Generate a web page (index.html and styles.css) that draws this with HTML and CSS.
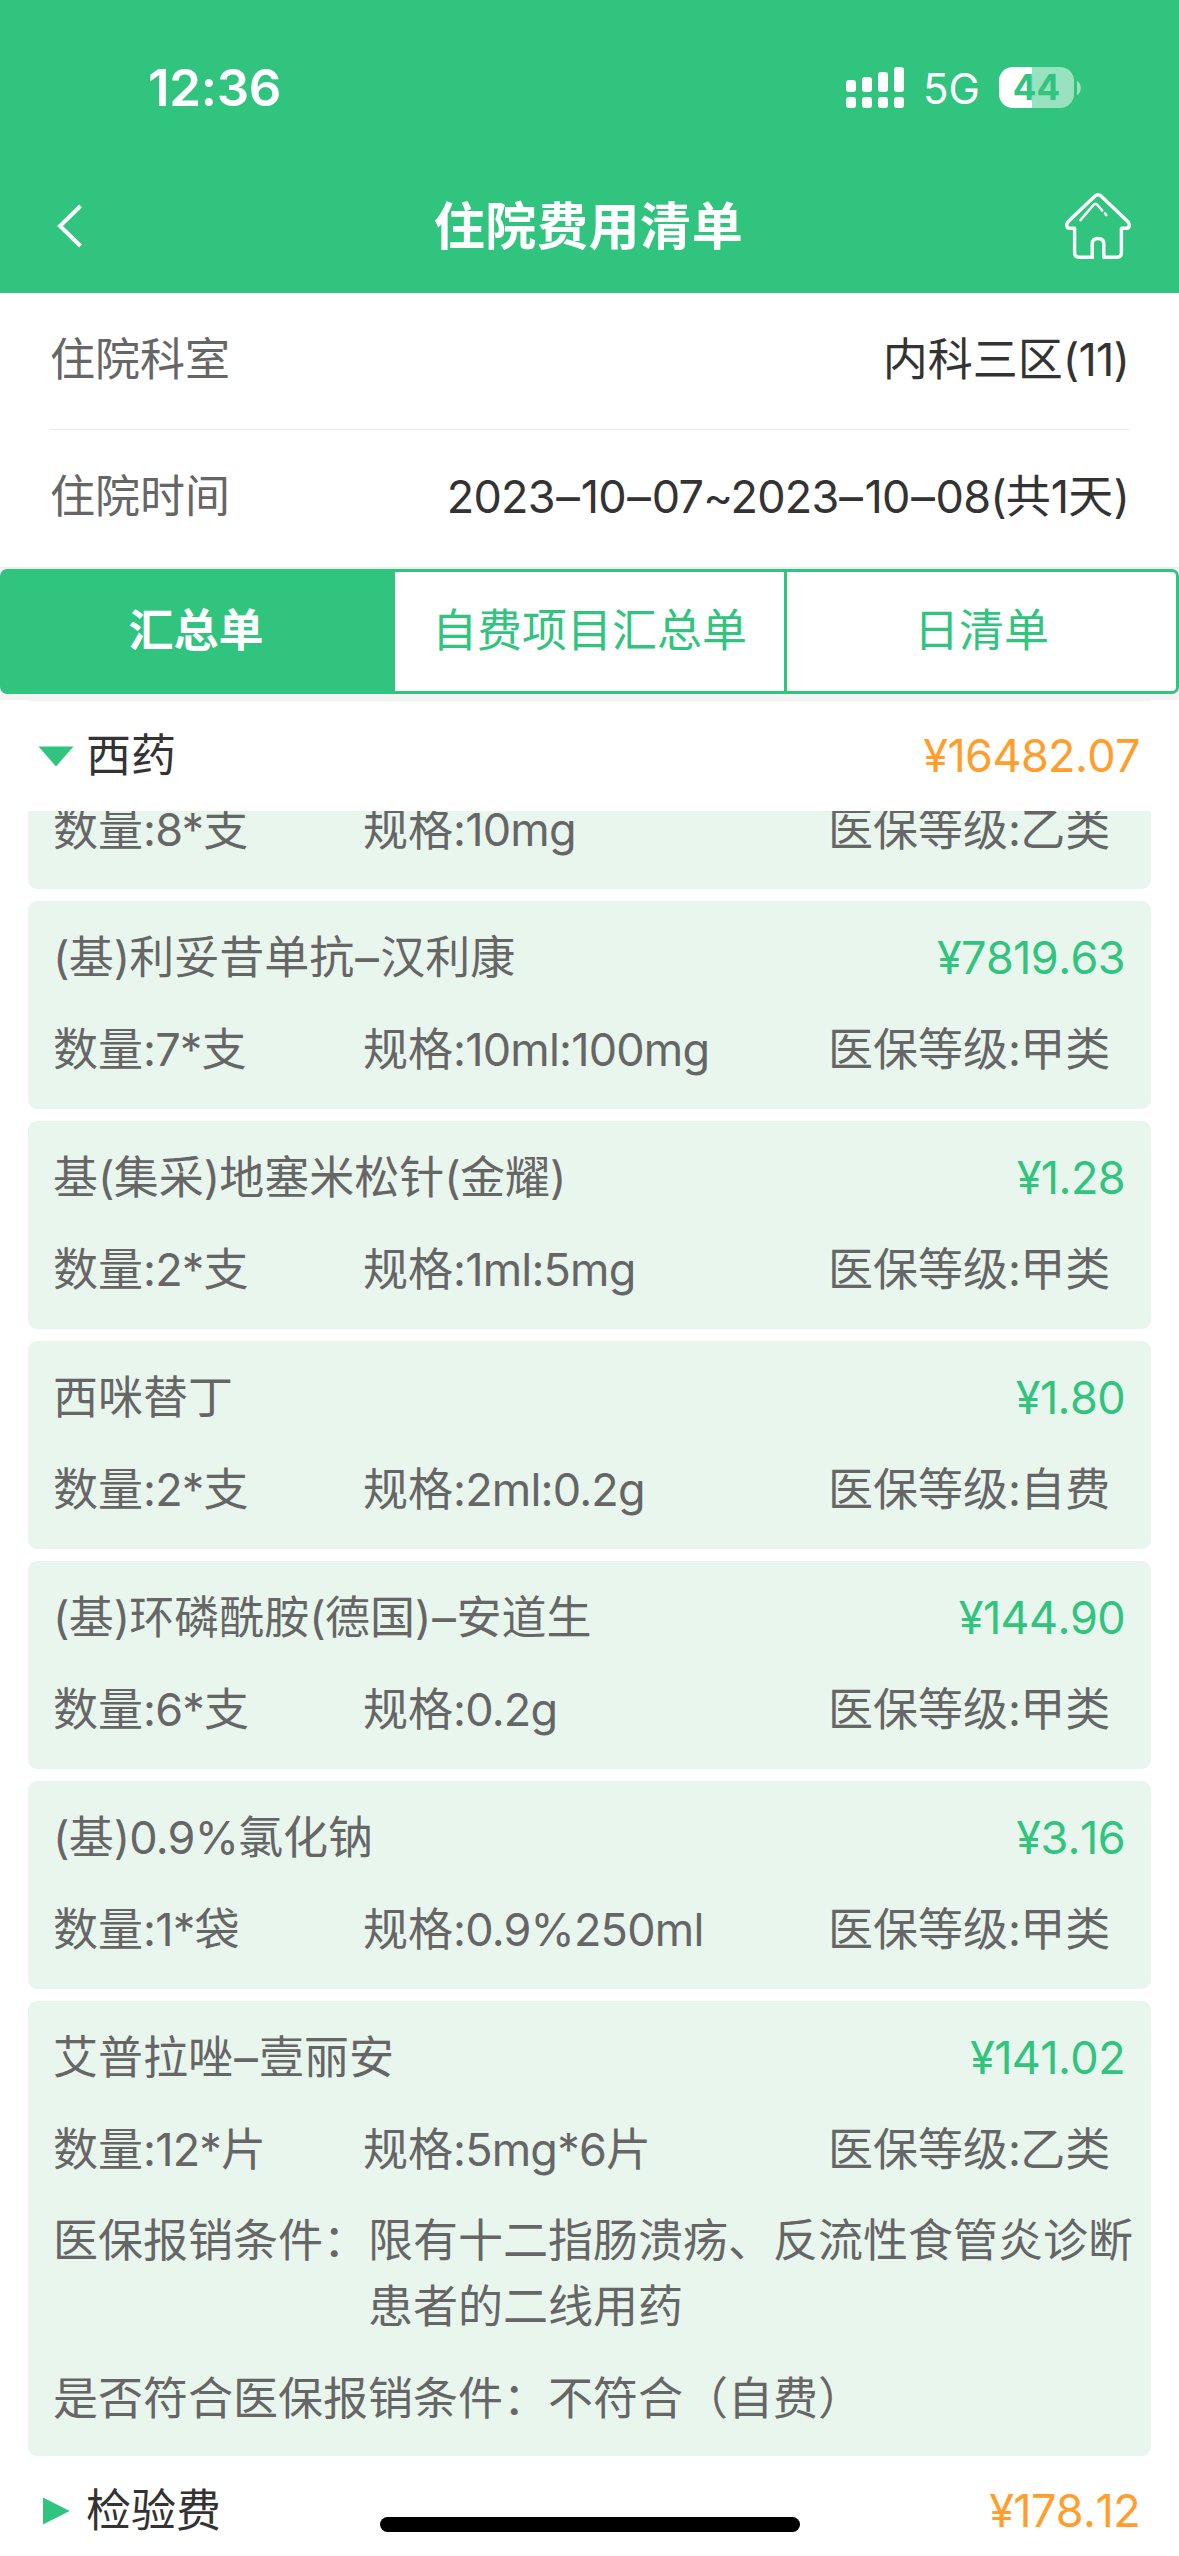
FILE: index.html
```html
<!DOCTYPE html>
<html lang="zh-CN">
<head>
<meta charset="utf-8">
<title>住院费用清单</title>
<link rel="stylesheet" href="styles.css">
</head>
<body>
<div class="screen">
  <header class="header">
    <div class="status">
      <span class="time">12:36</span>
      <div class="status-right">
        <svg class="signal" width="58" height="41" viewBox="0 0 58 41" fill="#fff">
          <rect x="0" y="13" width="10" height="12" rx="3"/><rect x="16" y="10" width="10" height="15" rx="3"/><rect x="32" y="5" width="10" height="20" rx="3"/><rect x="48" y="0" width="10" height="25" rx="3"/>
          <rect x="0" y="30" width="10" height="11" rx="3"/><rect x="16" y="30" width="10" height="11" rx="3"/><rect x="32" y="30" width="10" height="11" rx="3"/><rect x="48" y="30" width="10" height="11" rx="3"/>
        </svg>
        <span class="network">5G</span>
        <div class="battery"><span class="level">44</span></div>
        <svg class="nub" width="4" height="14" viewBox="0 0 4 14"><path d="M0 0C5 2 5 12 0 14Z" fill="#98e2bf"/></svg>
      </div>
    </div>
    <nav class="navbar">
      <svg class="back" width="26" height="44" viewBox="0 0 26 44" fill="none" stroke="#fff" stroke-width="4"><path d="M23.500 2L3 22L23.500 42"/></svg>
      <h1 class="title">住院费用清单</h1>
      <svg class="home" width="66" height="66" viewBox="0 0 66 66" fill="none" stroke="#fff" stroke-width="3.400" stroke-linejoin="round">
        <path d="M29 64.200H14Q9.600 64.200 9.600 59.500V35.300H4.500Q1.700 35.300 1.700 32Q1.700 30 3.500 28.300L30 3Q33 .5 36 3L62.500 28.300Q64.300 30 64.300 32Q64.300 35.300 61.500 35.300H56.400V59.500Q56.400 64.200 52 64.200H38.800V51Q38.800 45.500 33 45.500Q27.200 45.500 27.200 51V64.200"/>
        <path d="M15.500 27L28.500 12Q30.500 9.500 32.500 12L37.200 17.500M40 20.500L41.300 22" stroke-width="2.600" stroke-linecap="round"/>
      </svg>
    </nav>
  </header>

  <section class="info">
    <div class="info-row"><span class="label">住院科室</span><span class="value">内科三区<span class="n">(11)</span></span></div>
    <div class="info-row"><span class="label">住院时间</span><span class="value"><span class="n">2023<span class="dash">–</span>10<span class="dash">–</span>07~2023<span class="dash">–</span>10<span class="dash">–</span>08(</span>共<span class="n">1</span>天<span class="n">)</span></span></div>
  </section>

  <div class="tabs">
    <div class="tab active">汇总单</div>
    <div class="tab">自费项目汇总单</div>
    <div class="tab">日清单</div>
  </div>

  <main class="list">
    <div class="peek"></div>
    <div class="category">
      <svg class="arrow" width="36" height="28" viewBox="0 0 36 28"><path d="M.5 4.500H35.500L18 24.500Z" fill="#31c47e"/></svg>
      <span class="cat-name">西药</span><span class="cat-price">¥16482.07</span>
    </div>

    <div class="clipped">
      <article class="card">
        <div class="detail"><span>数量<span class="n">:8*</span>支</span><span>规格<span class="n">:10mg</span></span><span>医保等级<span class="n">:</span>乙类</span></div>
      </article>
    </div>

    <article class="card">
      <div class="head"><span><span class="n">(</span>基<span class="n">)</span>利妥昔单抗<span class="dash">–</span>汉利康</span><span class="price">¥7819.63</span></div>
      <div class="detail"><span>数量<span class="n">:7*</span>支</span><span>规格<span class="n">:10ml:100mg</span></span><span>医保等级<span class="n">:</span>甲类</span></div>
    </article>
    <article class="card">
      <div class="head"><span>基<span class="n">(</span>集采<span class="n">)</span>地塞米松针<span class="n">(</span>金耀<span class="n">)</span></span><span class="price">¥1.28</span></div>
      <div class="detail"><span>数量<span class="n">:2*</span>支</span><span>规格<span class="n">:1ml:5mg</span></span><span>医保等级<span class="n">:</span>甲类</span></div>
    </article>
    <article class="card">
      <div class="head"><span>西咪替丁</span><span class="price">¥1.80</span></div>
      <div class="detail"><span>数量<span class="n">:2*</span>支</span><span>规格<span class="n">:2ml:0.2g</span></span><span>医保等级<span class="n">:</span>自费</span></div>
    </article>
    <article class="card">
      <div class="head"><span><span class="n">(</span>基<span class="n">)</span>环磷酰胺<span class="n">(</span>德国<span class="n">)</span><span class="dash">–</span>安道生</span><span class="price">¥144.90</span></div>
      <div class="detail"><span>数量<span class="n">:6*</span>支</span><span>规格<span class="n">:0.2g</span></span><span>医保等级<span class="n">:</span>甲类</span></div>
    </article>
    <article class="card">
      <div class="head"><span><span class="n">(</span>基<span class="n">)0.9%</span>氯化钠</span><span class="price">¥3.16</span></div>
      <div class="detail"><span>数量<span class="n">:1*</span>袋</span><span>规格<span class="n">:0.9%250ml</span></span><span>医保等级<span class="n">:</span>甲类</span></div>
    </article>
    <article class="card last">
      <div class="head"><span>艾普拉唑<span class="dash">–</span>壹丽安</span><span class="price">¥141.02</span></div>
      <div class="detail"><span>数量<span class="n">:12*</span>片</span><span>规格<span class="n">:5mg*6</span>片</span><span>医保等级<span class="n">:</span>乙类</span></div>
      <div class="cond"><span>医保报销条件：</span><span>限有十二指肠溃疡、反流性食管炎诊断<br>患者的二线用药</span></div>
      <div class="cond"><span>是否符合医保报销条件：不符合（自费）</span></div>
    </article>

    <div class="category">
      <svg class="arrow" width="36" height="28" viewBox="0 0 36 28"><path d="M5 .5V27.500L31.700 14Z" fill="#31c47e"/></svg>
      <span class="cat-name">检验费</span><span class="cat-price">¥178.12</span>
    </div>
  </main>
  <div class="home-indicator"></div>
</div>
</body>
</html>
```
FILE: styles.css
```css
* { box-sizing: border-box; }
body { margin: 0; }
.screen {
  position: relative;
  width: 1179px;
  height: 2556px;
  overflow: hidden;
  background: #fff;
  color: #666;
  font: 400 45px/66px Inter, "Noto Sans CJK SC", sans-serif;
  white-space: nowrap;
}
.n { letter-spacing: -0.8px; }
.dash {
  display: inline-block;
  width: 26px;
  letter-spacing: 0;
  text-align: center;
  transform: scaleX(1.05);
}
svg { display: block; flex: none; }

.header { height: 293px; background: #31c47e; color: #fff; }
.status {
  display: flex;
  justify-content: space-between;
  align-items: center;
  height: 175px;
  padding: 0 98px 0 148px;
}
.time { font-size: 51px; font-weight: 600; letter-spacing: -0.3px; }
.status-right { display: flex; align-items: center; }
.network { width: 95px; padding: 2px 0 0 19px; font-size: 42px; }
.battery {
  display: flex;
  align-items: center;
  justify-content: center;
  width: 75px;
  height: 41px;
  border-radius: 14px;
  background: linear-gradient(90deg, #fff 33px, #98e2bf 33px);
}
.level { color: #31c47e; font-size: 35px; font-weight: 700; line-height: 41px; }
.nub { margin-left: 3px; }
.navbar {
  display: flex;
  justify-content: space-between;
  align-items: center;
  height: 102px;
  padding: 0 48px 0 57px;
}
.title { margin: 2px 0 0 29px; font-size: 51px; font-weight: 700; letter-spacing: 0.6px; }

.info { padding: 0 50px; height: 276px; border-bottom: 2px solid #ededed; }
.info-row { display: flex; justify-content: space-between; align-items: center; height: 137px; padding-bottom: 3px; }
.info-row:first-child { border-bottom: 1px solid #e8e8f0; }
.value { color: #333; }

.tabs {
  display: grid;
  grid-template-columns: 392px 392px 1fr;
  height: 125px;
  border: 3px solid #31c47e;
  border-radius: 7px;
}
.tab { display: flex; align-items: center; justify-content: center; color: #31c47e; padding-bottom: 2px; }
.tab:nth-child(2) { border-right: 3px solid #31c47e; }
.tab.active { padding-right: 6px; background: #31c47e; color: #fff; font-weight: 700; }

.peek { height: 7px; border-top: 6px solid #f4f4f4; margin: 0 -28px; background: linear-gradient(90deg, #fff 28px, #e9f6ee 28px, #e9f6ee 1151px, #fff 1151px); }
.list { padding: 0 28px; }
.category { display: flex; align-items: center; height: 110px; padding: 0 11px 0 10px; color: #333; }
.cat-name { margin-left: 12px; }
.cat-price { margin-left: auto; color: #ff9e2c; }
.price, .cat-price { font-kerning: none; letter-spacing: -0.6px; }

.clipped { display: flex; flex-direction: column; justify-content: flex-end; height: 78px; margin-bottom: 12px; overflow: hidden; }
.card {
  display: flex;
  flex-direction: column;
  flex: none;
  gap: 26px;
  height: 208px;
  margin-bottom: 12px;
  padding: 24px 26px 0 25px;
  border-radius: 9px;
  background: #e9f6ee;
}
.clipped .card { margin: 0; padding-top: 116px; }
.head { display: flex; justify-content: space-between; }
.price { color: #31c47e; }
.detail { display: grid; grid-template-columns: 310px 465px 1fr; }
.cond { display: flex; }
.card.last { height: 455px; gap: 25.5px; margin-bottom: 0; }

.home-indicator {
  position: absolute;
  left: 380px;
  top: 2517px;
  width: 420px;
  height: 15px;
  border-radius: 8px;
  background: #000;
}
```
